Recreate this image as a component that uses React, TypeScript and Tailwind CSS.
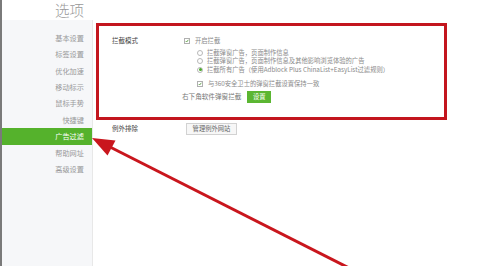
import React from 'react'

const font = { fontFamily: '"Noto Sans CJK SC", "Noto Sans", sans-serif' }

const menu = ['基本设置', '标签设置', '优化加速', '移动标示', '鼠标手势', '快捷键', '广告过滤', '帮助网址', '高级设置']

function Check() {
  return (
    <span className="w-[6px] h-[6px] border border-[#b0b0b0] bg-white flex items-center justify-center shrink-0">
      <svg viewBox="0 0 6 6" className="w-[6px] h-[6px]">
        <path d="M1 3 L2.5 4.5 L5 1.2" fill="none" stroke="#3f8f22" strokeWidth="1.1" />
      </svg>
    </span>
  )
}

function Radio({ on }: { on?: boolean }) {
  return (
    <span className="w-[6px] h-[6px] rounded-full border border-[#b8b8b8] bg-white flex items-center justify-center shrink-0">
      {on && <span className="w-[3px] h-[3px] rounded-full bg-[#4aa82a]" />}
    </span>
  )
}

export default function App() {
  return (
    <div
      className="relative w-[487px] h-[266px] overflow-hidden bg-white border-l-2 border-[#7a7a7a]"
      style={font}
    >
      {/* title */}
      <div className="h-[20px] w-[90px] text-right pr-[8px] text-[14.5px] leading-[20px] text-[#999] font-light">
        选项
      </div>

      <div className="flex h-[246px]">
        {/* sidebar */}
        <div className="w-[91px] bg-[#f6f7f9] border-r border-[#e8e8e8] pt-[10px] shrink-0">
          {menu.map((m) => {
            const active = m === '广告过滤'
            return (
              <div
                key={m}
                className={[
                  'h-[16.4px] flex items-center justify-end pr-[8px] text-[7.2px]',
                  active ? 'bg-[#55b22c] text-white' : 'text-[#999]',
                ].join(' ')}
              >
                {m}
              </div>
            )
          })}
        </div>

        {/* content */}
        <div className="flex-1 pl-[19px] pt-[16.5px] text-[6.3px] text-[#8a8a8a]">
          <div className="flex">
            <div className="w-[72px] h-[9px] flex items-center text-[6.5px] text-[#444]">拦截模式</div>
            <div>
              <div className="h-[9px] flex items-center gap-[5px]">
                <Check />
                <span>开启拦截</span>
              </div>
              <div className="pl-[13px] mt-[2.75px]">
                <div className="h-[8.5px] flex items-center gap-[4px]">
                  <Radio />
                  <span>拦截弹窗广告，页面制作信息</span>
                </div>
                <div className="h-[8.5px] flex items-center gap-[4px]">
                  <Radio />
                  <span>拦截弹窗广告，页面制作信息及其他影响浏览体验的广告</span>
                </div>
                <div className="h-[8.5px] flex items-center gap-[4px]">
                  <Radio on />
                  <span>拦截所有广告（使用Adblock Plus ChinaList+EasyList过滤规则）</span>
                </div>
              </div>
              <div className="pl-[13px] mt-[5.75px] h-[9px] flex items-center gap-[5px]">
                <Check />
                <span>与360安全卫士的弹窗拦截设置保持一致</span>
              </div>
              <div className="mt-[2.5px] h-[12px] flex items-center -ml-[2px]">
                <span className="text-[6.6px] text-[#777]">右下角软件弹窗拦截</span>
                <span className="ml-[6px] w-[24px] h-[12px] bg-[#5bb632] text-white flex items-center justify-center text-[6.3px]">
                  设置
                </span>
              </div>
            </div>
          </div>

          <div className="flex mt-[20px]">
            <div className="w-[74px] h-[12px] flex items-center text-[6.5px] text-[#444]">例外排除</div>
            <span className="w-[51px] h-[12px] border border-[#d2d2d2] bg-[#f7f7f7] flex items-center justify-center text-[6.3px] text-[#666]">
              管理例外网站
            </span>
          </div>
        </div>
      </div>

      {/* annotation: red box */}
      <div className="absolute left-[94px] top-[23px] w-[351px] h-[97px] border-[3px] border-[#c3161e] pointer-events-none" />

      {/* annotation: arrow */}
      <svg className="absolute -left-[2px] top-0 w-[487px] h-[266px] pointer-events-none" viewBox="0 0 487 266">
        <line x1="111" y1="147.5" x2="353" y2="270" stroke="#c9161d" strokeWidth="3" />
        <polygon points="92,138 115.5,140.5 107.5,155.5" fill="#c9161d" />
      </svg>
    </div>
  )
}
